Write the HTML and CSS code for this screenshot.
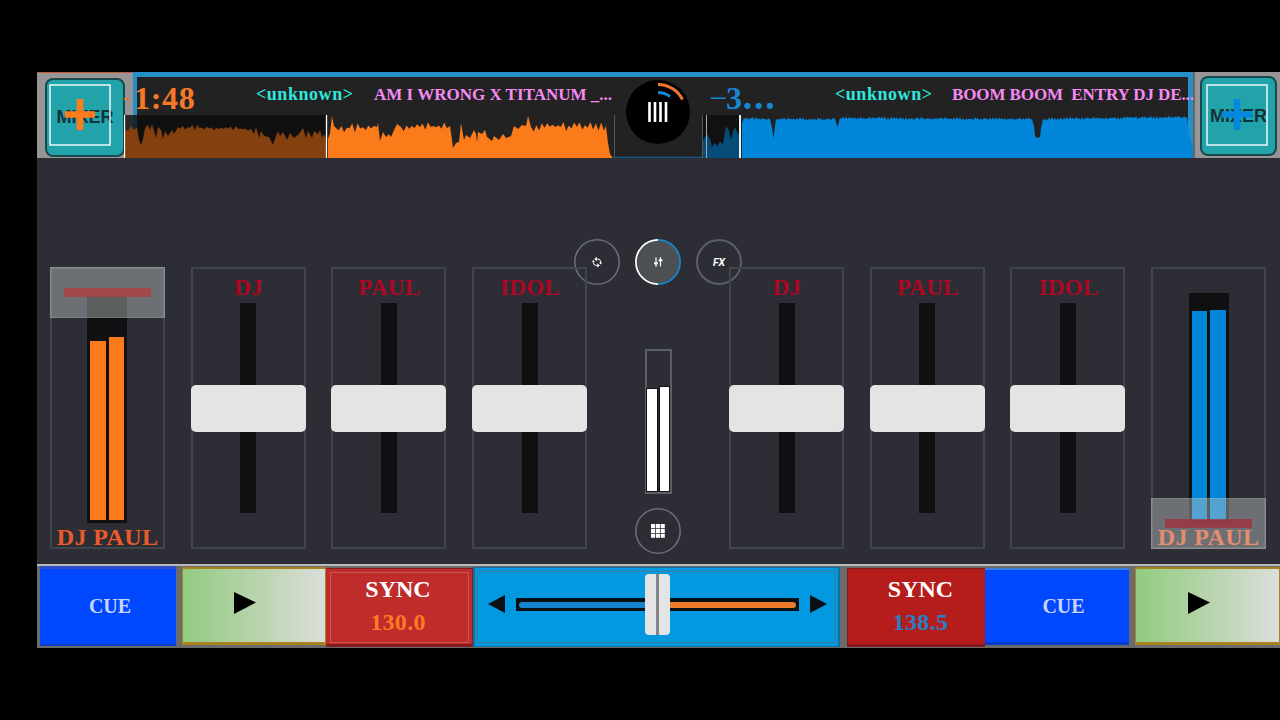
FILE: index.html
```html
<!DOCTYPE html>
<html lang="en">
<head>
<meta charset="utf-8">
<title>DJ Mixer</title>
<link rel="stylesheet" href="styles.css">
</head>
<body>
<main class="app">
  <header class="header">
    <div class="tile tile-a">
      <div class="pad"><span class="pad-text">MIXER</span><svg class="pad-mark orange" viewBox="0 0 62 62"><rect x="1" y="1" width="60" height="60" fill="none" stroke="#eef7f7" stroke-width="1.500"/><path d="M31 15v31M16 30.500h30" stroke="currentColor" stroke-width="6.500"/></svg></div>
    </div>
    <div class="decks">
      <div class="info info-a"><span class="time">1:48</span><span class="artist">&lt;unknown&gt;</span><span class="title">AM I WRONG X TITANUM _...</span></div>
      <svg class="logo" viewBox="0 0 64 64"><circle cx="32" cy="32" r="32" fill="#000"/><path d="M32 4.500A27.500 27.500 0 0 1 56.500 19.500" fill="none" stroke="#ee7a2c" stroke-width="3"/><path d="M32 12.500A20 20 0 0 1 44 16.500" fill="none" stroke="#1b86cf" stroke-width="3"/><path d="M23.500 22v20M29 22v20M34.500 22v20M40 22v20" stroke="#fff" stroke-width="2.600"/></svg>
      <div class="info info-b"><span class="time"><span class="dash">−</span>3<b class="dots">...</b></span><span class="artist">&lt;unknown&gt;</span><span class="title">BOOM BOOM&nbsp; ENTRY DJ DE...</span></div>
    </div>
    <div class="tile tile-b">
      <div class="pad"><span class="pad-text">MIXER</span><svg class="pad-mark blue" viewBox="0 0 62 62"><rect x="1" y="1" width="60" height="60" fill="none" stroke="#eef7f7" stroke-width="1.500"/><path d="M31 15v31M16 30.500h30" stroke="currentColor" stroke-width="6.500"/></svg></div>
    </div>
    <span class="minus"></span>
    <svg class="waves" viewBox="124 115 1069 43">
      <rect x="124" y="115" width="202" height="43" fill="#0c0c0c" fill-opacity=".78"/>
      <rect x="702" y="115" width="38" height="43" fill="#111"/>
      <path id="a1" fill="#84400f"/><path id="a2" fill="#fb7b1b"/>
      <path id="b1" fill="#064c78"/><path id="b2" fill="#0286d9"/>
      <path d="M124.500 115v43M326.500 115v43" stroke="#fff" stroke-width="1.300"/>
      <path d="M614.500 115v43M702.500 115v43" stroke="#555" stroke-width="1"/>
      <path d="M706.500 115v43" stroke="#aaa" stroke-width="1"/>
      <path d="M740 115v43" stroke="#e8f3fa" stroke-width="2"/>
      <path d="M612 157.500H702" stroke="#0b5a8b" stroke-width="1.300"/>
    </svg>
  </header>

  <section class="mixer">
    <div class="bank">
      <div class="strip vol vol-a"><div class="slot"><i class="bar a-l"></i><i class="bar a-r"></i></div><span class="vol-name">DJ PAUL</span><div class="handle top"><i></i></div></div>
      <div class="strip"><span class="name">DJ</span><div class="track"></div><div class="knob"></div></div>
      <div class="strip"><span class="name">PAUL</span><div class="track"></div><div class="knob"></div></div>
      <div class="strip"><span class="name">IDOL</span><div class="track"></div><div class="knob"></div></div>
    </div>
    <div class="center">
      <div class="modes">
        <svg class="round" viewBox="0 0 46 46"><circle cx="23" cy="23" r="22.200" fill="none" stroke="#6b6d74" stroke-width="1.600"/><path d="M22.300 20h1.500a2.800 2.800 0 0 1 2.800 2.800v1.400M23.700 26.400h-1.500a2.800 2.800 0 0 1-2.800-2.800v-1.400" fill="none" stroke="#fff" stroke-width="1"/><path d="M22.800 17.800l-2.600 2.200 2.600 2.200zM23.200 24.200l2.600 2.200-2.600 2.200zM25 23.400h3.200l-1.600 2zM17.800 23h3.200l-1.600-2z" fill="#fff"/></svg>
        <svg class="round" viewBox="0 0 46 46"><circle cx="23" cy="23" r="22" fill="#4c5053"/><path d="M23 .9a22.100 22.100 0 0 0 0 44.200" fill="none" stroke="#fff" stroke-width="1.700"/><path d="M23 .9a22.100 22.100 0 0 1 0 44.200" fill="none" stroke="#1686cd" stroke-width="1.700"/><path d="M21 18.300v4.800M21 26v1.700M25.500 18v1.400M25.500 22v5.500" stroke="#fff" stroke-width="1.200"/><path d="M19 23.300h4v1.400l-2 1.600-2-1.600zM23.500 22.300h4v-1.400l-2-1.600-2 1.600z" fill="#fff"/></svg>
        <div class="round fx">FX</div>
      </div>
      <div class="master"><i class="m-l"></i><i class="m-r"></i></div>
      <svg class="round" viewBox="0 0 46 46"><circle cx="23" cy="23" r="22.200" fill="none" stroke="#6b6d74" stroke-width="1.600"/><path d="M16 18h13.800M16 22.900h13.800M16 27.800h13.800" stroke="#fff" stroke-width="4.100" stroke-dasharray="4.100 .75"/></svg>
    </div>
    <div class="bank">
      <div class="strip"><span class="name">DJ</span><div class="track"></div><div class="knob"></div></div>
      <div class="strip"><span class="name">PAUL</span><div class="track"></div><div class="knob"></div></div>
      <div class="strip"><span class="name">IDOL</span><div class="track"></div><div class="knob"></div></div>
      <div class="strip vol vol-b"><div class="slot"><i class="bar b-l"></i><i class="bar b-r"></i></div><span class="vol-name">DJ PAUL</span><div class="handle bottom"><i></i></div></div>
    </div>
  </section>

  <footer class="transport">
    <div class="cue cue-a">CUE</div>
    <div class="play play-a"><svg viewBox="0 0 22 22"><path d="M0 0L22 10.500 0 22z"/></svg></div>
    <div class="sync sync-a"><b>SYNC</b><span>130.0</span></div>
    <div class="fader">
      <svg class="arrow" viewBox="0 0 17 18"><path d="M17 0v18L0 9z"/></svg>
      <div class="rail"><i class="rail-l"></i><i class="rail-r"></i><div class="cross"></div></div>
      <svg class="arrow" viewBox="0 0 17 18"><path d="M0 0v18L17 9z"/></svg>
    </div>
    <div class="sync sync-b"><b>SYNC</b><span>138.5</span></div>
    <div class="cue cue-b">CUE</div>
    <div class="play play-b"><svg viewBox="0 0 22 22"><path d="M0 0L22 10.500 0 22z"/></svg></div>
  </footer>
</main>
<script src="waves.js"></script>
</body>
</html>
```
FILE: waves.js
```js
// Each deck envelope is a list of [x, y] peaks; teeth are added between them.
function draw(id, pts, amp, step) {
  let d = 'M' + pts[0][0] + ' 158', n = 7;
  for (let i = 0; i < pts.length - 1; i++) {
    const [x0, y0] = pts[i], [x1, y1] = pts[i + 1];
    d += 'L' + x0 + ' ' + y0;
    if (x1 - x0 < 12) continue;
    let up = false;
    for (let x = x0 + step; x < x1 - 1; x += step) {
      n = (n * 73 + 41) % 101;
      const r = n / 101;
      const y = y0 + (y1 - y0) * (x - x0) / (x1 - x0) + (up ? -r : r) * amp;
      d += 'L' + x.toFixed(1) + ' ' + y.toFixed(1);
      up = !up;
    }
  }
  const e = pts[pts.length - 1];
  d += 'L' + e[0] + ' ' + e[1] + 'V158Z';
  document.getElementById(id).setAttribute('d', d);
}
draw('a1', [[124,129],[128,131],[131,126],[134,130],[137,127],[139,140],[141,145],[143,139],[145,128],[148,125],[150,130],[152,124],[154,131],[156,138],[158,127],[161,130],[163,139],[165,131],[168,136],[172,130],[174,134],[178,127],[251,129],[254,134],[256,127],[259,138],[261,131],[264,136],[269,137],[273,145],[276,136],[278,131],[280,136],[283,132],[287,140],[290,133],[294,138],[299,134],[303,128],[306,138],[308,131],[312,138],[314,131],[318,134],[320,130],[322,138],[324,134],[326,139]], 3, 2.4);
draw('a2', [[328,139],[330,133],[332,116],[334,126],[336,128],[377,127],[378,123],[380,141],[383,132],[386,137],[389,134],[391,137],[395,128],[397,124],[401,127],[450,126],[452,140],[453,148],[456,143],[459,142],[461,123],[464,140],[466,135],[470,138],[474,130],[476,134],[477,142],[478,132],[482,134],[485,130],[487,137],[492,141],[494,136],[499,140],[503,134],[506,138],[511,136],[514,126],[518,129],[522,125],[526,126],[528,116],[531,127],[606,126],[608,143],[610,154],[613,158]], 5, 2.7);
draw('b1', [[702,142],[705,137],[707,134],[710,139],[712,147],[715,143],[717,146],[720,142],[723,144],[725,132],[726,126],[729,131],[731,140],[733,131],[735,127],[738,134],[740,132]], 2, 2);
draw('b2', [[742,123],[744,118],[770,119],[772,128],[773.5,138],[776,119],[835,119],[837.5,127],[840,118],[1032,119],[1034,126],[1035,136],[1037,138],[1040,137],[1041,128],[1043,119],[1187,117],[1189,133],[1193,148]], 1.8, 1.5);
```
FILE: styles.css
```css
* { box-sizing: border-box; }
body { margin: 0; background: #000; height: 720px; overflow: hidden; font-family: "Liberation Serif", serif; font-weight: bold; }
i { display: block; }
svg { display: block; }
.app { margin: 72px 0 0 37px; width: 1243px; height: 576px; background: #2c2d35; overflow: hidden; }

.header { position: relative; display: grid; grid-template-columns: 96px 1060px 87px; height: 86px; background: #222; }
.tile { background: #979595; padding: 5px 0 0 8px; }
.tile-a { border-top: 1px solid #bd5a3c; }
.tile-b { padding: 4px 0 0 5px; border-left: 2px solid #666; }
.pad { display: grid; grid-template: 100% / 100%; place-items: center; width: 80px; height: 79px; border: 2px solid #17494e; border-radius: 8px; background: #22a3aa; }
.tile-b .pad { width: 77px; height: 80px; }
.pad-text { grid-area: 1 / 1; font: bold 18px "Liberation Sans", sans-serif; color: #103239; }
.pad-mark { grid-area: 1 / 1; place-self: start; width: 62px; height: 62px; margin: 4px 0 0 2px; }
.tile-a .pad-mark { margin-top: 4px; }
.tile-b .pad-mark { margin: 6px 0 0 4px; }
.orange { color: #ff7b1c; }
.blue { color: #0488dc; }
.minus { position: absolute; left: 87px; top: 26px; width: 6px; height: 2px; background: #df7935; }
.decks { position: relative; display: flex; border: solid #278fc8; border-width: 5px 5px 0 4px; }
.info { display: flex; white-space: pre; flex: none; }
.info-a { width: 489px; }
.info-b { width: 498px; padding-left: 22px; }
.logo { width: 64px; height: 64px; margin-top: 3px; flex: none; }
.time { width: 122px; flex: none; font-size: 32px; line-height: 43px; color: #f6792a; letter-spacing: .7px; margin-left: -3px; }
.info-b .time { width: 126px; color: #1886cf; }
.dash { display: inline-block; width: 17px; font-weight: normal; }
.dots { font-size: 38px; line-height: 30px; letter-spacing: 1.800px; }
.artist { width: 118px; flex: none; font-size: 18px; line-height: 35px; color: #31e6dd; letter-spacing: .55px; }
.title { font-size: 17px; line-height: 35px; color: #f68af4; letter-spacing: 0; }
.info-b .title { letter-spacing: -.1px; margin-left: -1px; }
.waves { position: absolute; left: 87px; top: 43px; width: 1069px; height: 43px; }

.mixer { display: flex; height: 406px; padding: 109px 0 0 13px; }
.bank { display: flex; gap: 25.700px; width: 537px; flex: none; }
.strip { position: relative; width: 115px; height: 282px; flex: none; border: 2px solid #42444b; display: flex; flex-direction: column; align-items: center; }
.name { margin-top: 6px; height: 28px; line-height: 26px; font-size: 23px; letter-spacing: .3px; padding-left: 1px; color: #ac0724; flex: none; }
.track { width: 16px; height: 210px; flex: none; background: #0f1011; }
.knob { position: absolute; left: -2px; top: 116px; width: 115px; height: 47px; border-radius: 5px; background: #e4e4e4; }
.slot { flex: none; margin-top: 24px; width: 40px; height: 230px; background: #0f1011; display: flex; align-items: flex-end; justify-content: center; gap: 3px; padding-bottom: 3px; }
.vol-a .slot { margin-left: -1px; }
.bar { width: 15.500px; }
.vol-a .bar { background: #fb7b1b; }
.vol-b .bar { background: #0286d9; }
.a-l { height: 179px; }
.a-r { height: 183px; }
.b-l { height: 209px; }
.b-r { height: 210px; }
.vol-name { flex: none; margin-top: 1px; font-size: 24px; line-height: 26px; letter-spacing: .4px; color: #eb5a2a; white-space: nowrap; }
.handle { position: absolute; left: -2px; width: 115px; height: 51px; background: rgba(192,200,198,.43); border: 1px solid rgba(200,205,205,.2); display: flex; justify-content: center; align-items: center; }
.handle i { width: 87px; height: 9px; background: #a4474b; }
.top { top: -2px; }
.bottom { top: 229px; }
.bottom i { background: rgba(164,45,56,.75); }
.vol-b .vol-name { color: #ff612f; }

.center { width: 142px; flex: none; display: flex; flex-direction: column; align-items: center; margin-top: -28px; }
.modes { display: flex; gap: 15px; margin: 0 -13px; }
.round { width: 46px; height: 46px; flex: none; }
.fx { border: 2px solid #5d5f66; border-radius: 50%; text-align: center; font: italic bold 10.500px/43px Roboto, sans-serif; color: #fff; }
.master { margin: 64px 0 14px; width: 27px; height: 145px; border: 2px solid #5d5f66; display: flex; align-items: flex-end; justify-content: center; gap: 3px; padding-bottom: 1px; }
.master i { width: 9.500px; background: #fff; box-shadow: 0 0 0 1px #111; }
.m-l { height: 102px; }
.m-r { height: 104px; }

.transport { display: flex; align-items: flex-start; height: 84px; padding: 0 0 0 3px; background: #6b6b6b; border-top: 2px solid #b9bbb9; }
.cue { color: #c8d4fa; background: #0048ff; font-size: 20px; text-align: center; }
.cue-a { width: 136px; height: 80px; line-height: 80px; padding-left: 4px; margin-right: 6px; box-shadow: inset 0 3px #2c50c5, inset 0 -2px #0d40c2; }
.cue-b { width: 144px; height: 77px; margin: 2px 6px 0 0; line-height: 76px; padding-left: 13px; box-shadow: inset 0 2px #397de1, inset 0 -3px #063dce; }
.play { height: 78px; width: 144px; margin-top: 1px; border: solid #a98320; border-width: 2px 1px 3px 1px; background: linear-gradient(90deg, #91cb80, #b9d4ad 52%, #dcdedb); display: flex; padding: 23px 0 0 51px; }
.play svg { width: 22px; height: 22px; }
.play-b { width: 145px; padding-left: 52px; }
.sync { height: 79px; margin-top: 2px; display: flex; flex-direction: column; align-items: center; color: #fff; font-size: 24px; line-height: 28px; padding-top: 6px; }
.sync span { margin-top: 5px; letter-spacing: .3px; }
.sync-a { width: 147px; background: #bf2c2c; border: solid #841d20; border-width: 1px 1px 3px 0; outline: 1px solid #cf5552; outline-offset: -5px; padding-right: 2px; }
.sync-a span { color: #fb7b23; }
.sync-b { width: 138px; background: #b51c1c; border: solid #851818; border-width: 1px 0 3px 1px; padding-left: 8px; }
.sync-b span { color: #2581c4; }
.fader { width: 367px; height: 80px; margin: 1px 7px 0 0; background: #0399e0; border: solid #146f9b; border-width: 1px 2px; outline: 1px solid #377f9c; outline-offset: -5px; display: flex; align-items: flex-start; padding: 27px 11px 0 13px; justify-content: space-between; }
.arrow { width: 17px; height: 18px; fill: #0b1014; }
.rail { position: relative; width: 283px; height: 13px; margin-top: 3px; background: #071015; display: flex; align-items: center; padding: 0 3px; }
.rail-l, .rail-r { flex: 1; height: 6px; }
.rail-l { background: #1683cf; border-radius: 4px 0 0 4px; }
.rail-r { background: #ee7b28; border-radius: 0 4px 4px 0; }
.cross { position: absolute; left: 129px; top: -24px; width: 25px; height: 61px; border-radius: 4px; background: linear-gradient(90deg, #e2e4e5 0 11px, #858585 11px 13.500px, #e2e4e5 13.500px); }
```
